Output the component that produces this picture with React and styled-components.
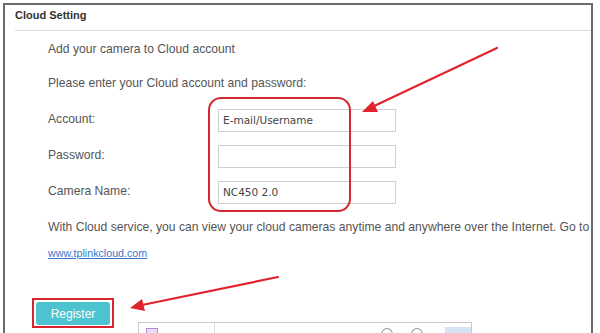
import React from "react";
import styled, { createGlobalStyle } from "styled-components";

const Global = createGlobalStyle`
  html, body { margin: 0; padding: 0; background: #fff; }
  body { font-family: "Liberation Sans", Arial, sans-serif; overflow: hidden; }
  #root { width: 600px; height: 333px; position: relative; overflow: hidden; }
`;

const Frame = styled.div`
  position: relative;
  margin: 3px 0 0 3px;
  width: 590px;
  height: 340px;
  border: 2px solid #6b6b6b;
  border-bottom: none;
  box-sizing: border-box;
`;

const Header = styled.div`
  margin-left: 10px;
  height: 26px;
  box-sizing: border-box;
  padding-top: 3px;
  border-bottom: 1px solid #dcdcdc;
`;

const Title = styled.h1`
  margin: 0;
  font-size: 11px;
  line-height: 14px;
  font-weight: bold;
  color: #333;
`;

const Body = styled.div`
  padding-left: 43px;
  display: flex;
  flex-direction: column;
  align-items: flex-start;
`;

const Text = styled.p`
  margin: ${(p) => p.$mt}px 0 0 0;
  font-size: 12.15px;
  line-height: 16px;
  color: #555;
  white-space: nowrap;
`;

const Form = styled.div`
  margin-top: 18px;
  display: grid;
  grid-template-columns: 170px 178px;
  row-gap: 13px;
  align-items: center;
`;

const Label = styled.label`
  font-size: 12.15px;
  color: #555;
  line-height: 16px;
  margin-top: -4px;
`;

const Field = styled.div`
  height: 23px;
  box-sizing: border-box;
  border: 1px solid #cfcfcf;
  padding-left: 4px;
  font-family: "DejaVu Sans", Verdana, sans-serif;
  font-size: 10.5px;
  line-height: 21px;
  color: #444;
`;

const Link = styled.a`
  margin-top: 10px;
  font-size: 10.7px;
  line-height: 16px;
  color: #3b78c9;
  text-decoration: underline;
`;

const Highlight = styled.div`
  margin: 37px 0 0 27px;
  border: 2px solid #d9262e;
  padding: 2px 2px 1px 2px;
  display: inline-flex;
`;

const Button = styled.button`
  width: 74px;
  height: 23px;
  border: none;
  border-radius: 3px;
  background: #4cc3cf;
  color: #fff;
  font-family: "Liberation Sans", Arial, sans-serif;
  font-size: 12px;
  padding: 0;
`;

const RoundBox = styled.div`
  position: absolute;
  left: 203px;
  top: 92px;
  width: 143px;
  height: 115px;
  box-sizing: border-box;
  border: 2px solid #d52832;
  border-radius: 13px;
  pointer-events: none;
`;

const Overlay = styled.svg`
  position: absolute;
  left: 0;
  top: 0;
  pointer-events: none;
`;

const Popup = styled.div`
  position: absolute;
  left: 138px;
  top: 322px;
  width: 334px;
  height: 24px;
  box-sizing: border-box;
  border: 1px solid #c9c9c9;
  background: #fff;
  display: flex;
  align-items: flex-start;
  padding: 5px 0 0 7px;
`;

const PurpleIcon = styled.div`
  width: 12px;
  height: 8px;
  border: 1px solid #b48ad6;
  background: #e9dcf5;
`;

const Divider = styled.div`
  width: 1px;
  height: 20px;
  margin: -5px 0 0 56px;
  background: #ddd;
`;

const Circle = styled.div`
  width: 12px;
  height: 12px;
  border-radius: 50%;
  border: 1px solid #999;
  margin-left: ${(p) => p.$ml}px;
`;

const BlueBlock = styled.div`
  width: 32px;
  height: 20px;
  margin: -1px 0 0 22px;
  background: #d6e4f5;
`;

export default function App() {
  return (
    <>
      <Global />
      <Frame>
        <Header>
          <Title>Cloud Setting</Title>
        </Header>
        <Body>
          <Text $mt={10}>Add your camera to Cloud account</Text>
          <Text $mt={18}>Please enter your Cloud account and password:</Text>
          <Form>
            <Label>Account:</Label>
            <Field>E-mail/Username</Field>
            <Label>Password:</Label>
            <Field />
            <Label>Camera Name:</Label>
            <Field>NC450 2.0</Field>
          </Form>
          <Text $mt={15}>
            With Cloud service, you can view your cloud cameras anytime and anywhere over the Internet. Go to
          </Text>
          <Link>www.tplinkcloud.com</Link>
        </Body>
        <Highlight>
          <Button>Register</Button>
        </Highlight>
        <RoundBox />
      </Frame>
      <Popup>
        <PurpleIcon />
        <Divider />
        <Circle $ml={166} />
        <Circle $ml={18} />
        <BlueBlock />
      </Popup>
      <Overlay width="600" height="333" viewBox="0 0 600 333">
        <line x1="497" y1="48" x2="372" y2="107" stroke="#e0232c" strokeWidth="2.2" strokeLinecap="round" />
        <polygon points="362,112 373,101 378,112" fill="#e0232c" />
        <line x1="278" y1="277" x2="142" y2="305" stroke="#e0232c" strokeWidth="2.2" strokeLinecap="round" />
        <polygon points="130,308 142,299 145,311" fill="#e0232c" />
      </Overlay>
    </>
  );
}
